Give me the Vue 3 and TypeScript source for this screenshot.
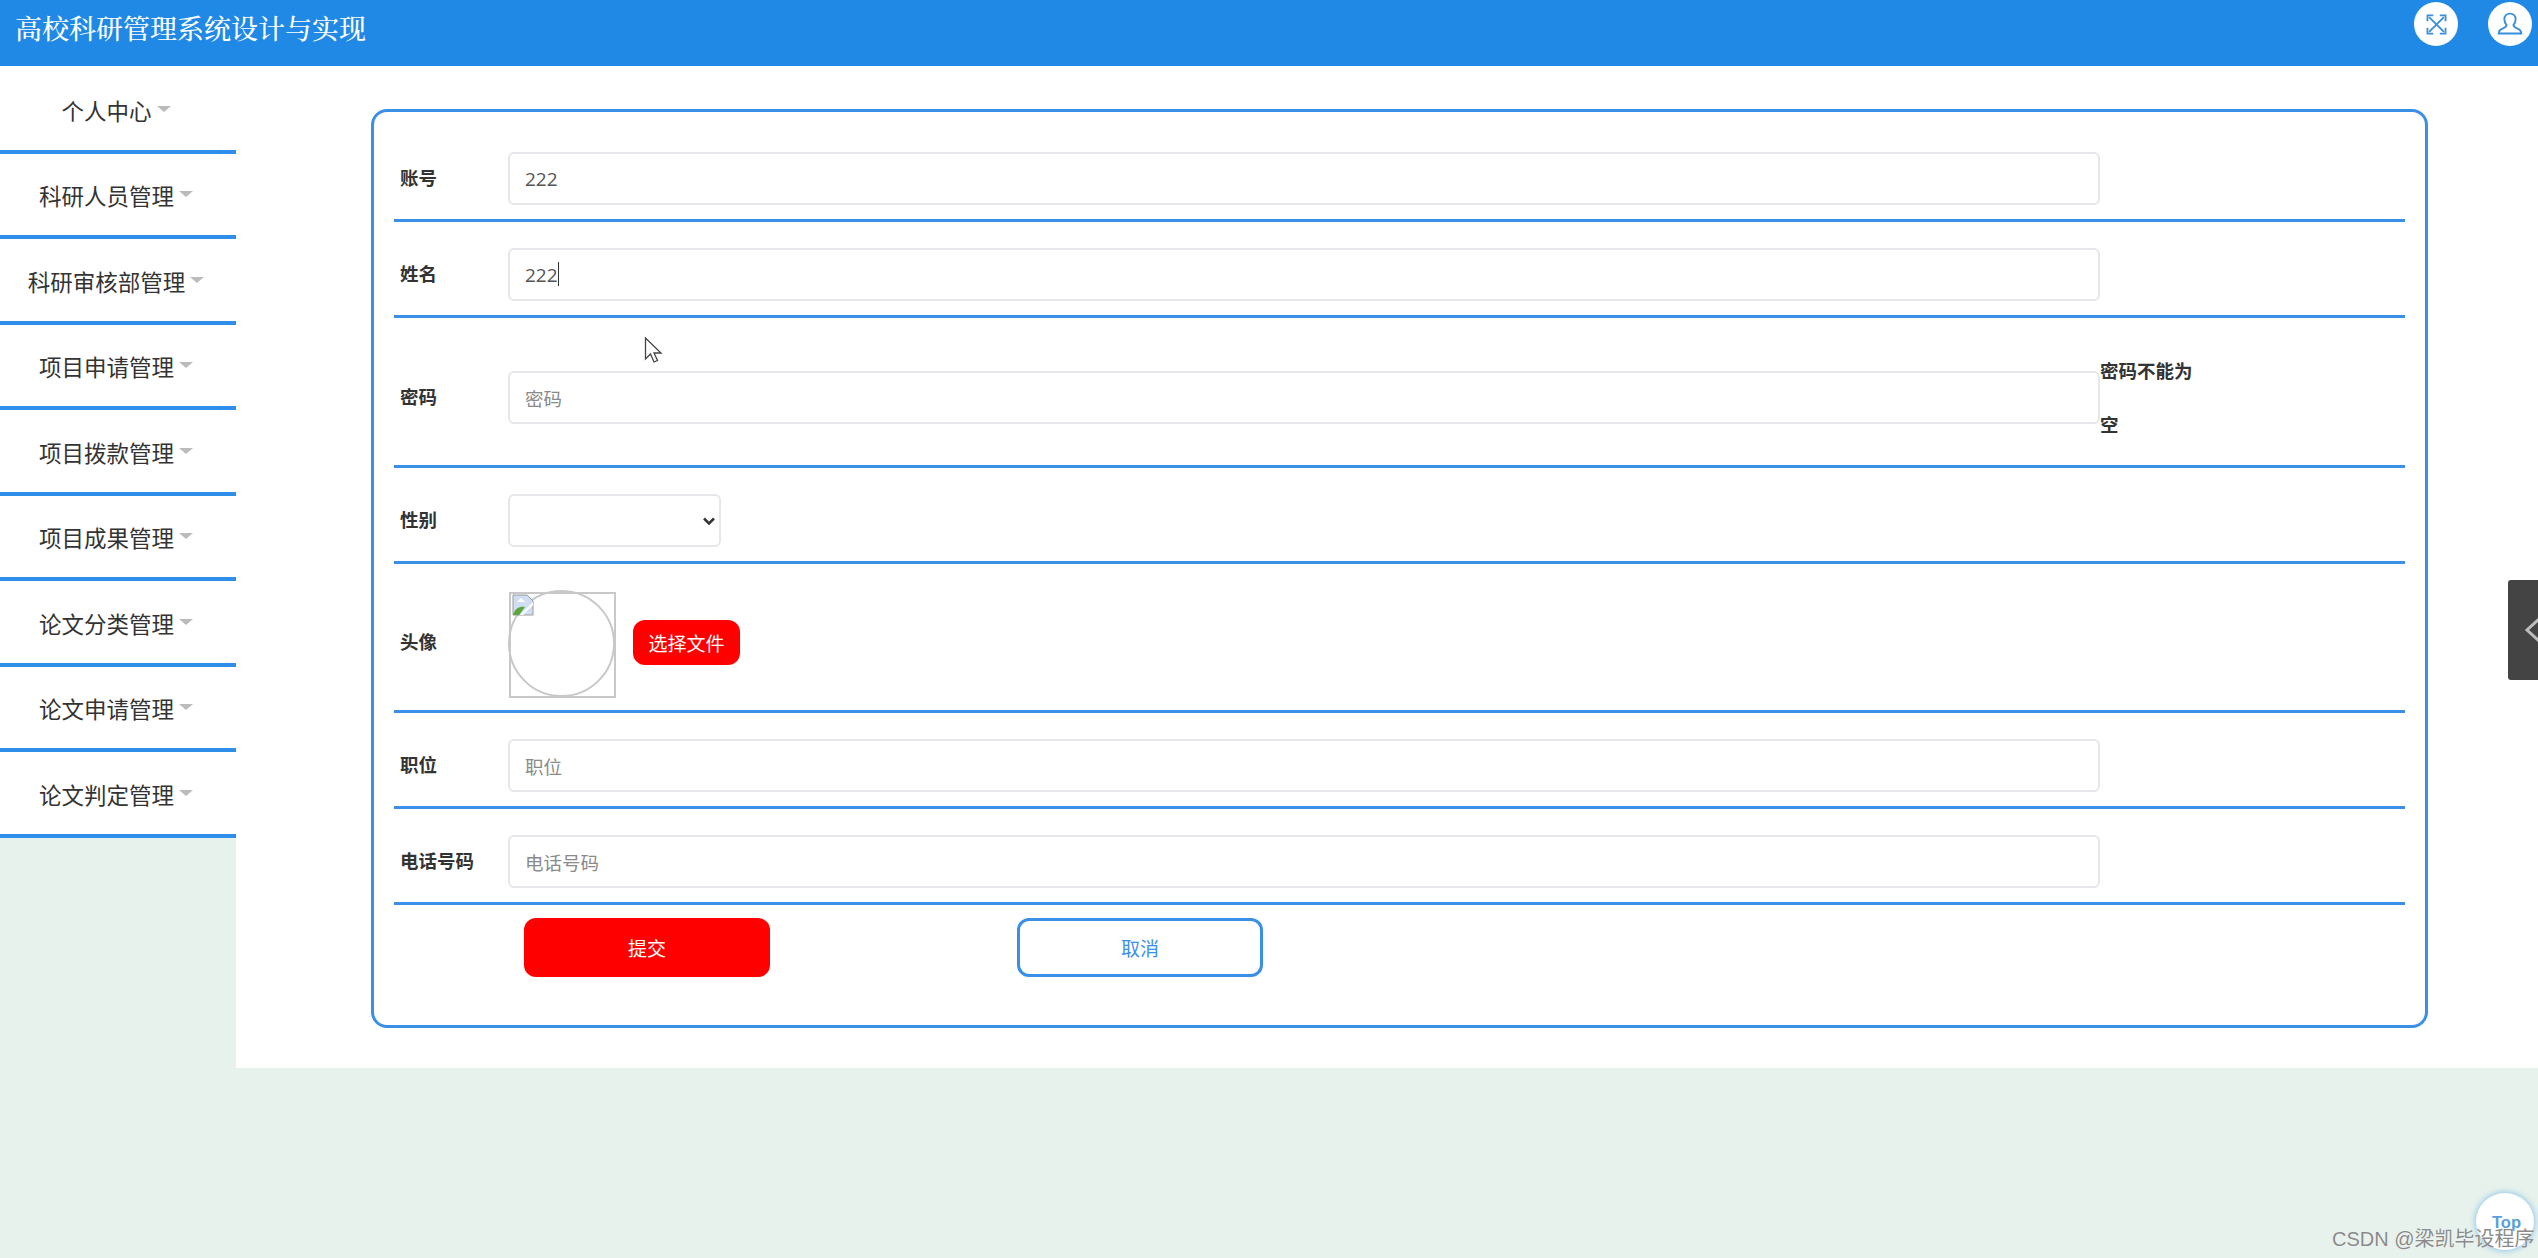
<script setup lang="ts">
const menu: string[] = [
  '个人中心',
  '科研人员管理',
  '科研审核部管理',
  '项目申请管理',
  '项目拨款管理',
  '项目成果管理',
  '论文分类管理',
  '论文申请管理',
  '论文判定管理',
]
</script>

<template>
  <div class="page">
    <header class="topbar">
      <div class="title">高校科研管理系统设计与实现</div>
      <div class="top-icons">
        <span class="round">
          <svg width="23" height="23" viewBox="0 0 28 28" fill="none" stroke="#3a8fdc" stroke-width="2.200">
            <path d="M5 5l18 18M23 5L5 23" />
            <path d="M3 10V3h7M18 3h7v7M25 18v7h-7M10 25H3v-7" />
          </svg>
        </span>
        <span class="round">
          <svg width="26" height="26" viewBox="0 0 30 30" fill="none" stroke="#3a8fdc" stroke-width="2.200">
            <path d="M15 3c-4 0-6.500 3-6.500 6.500 0 3 1.200 5 2.500 6.500 0 2-1 3-4 4-3 1-5 2.500-5 6h26c0-3.500-2-5-5-6-3-1-4-2-4-4 1.300-1.500 2.500-3.500 2.500-6.500C21.500 6 19 3 15 3z" />
          </svg>
        </span>
      </div>
    </header>

    <div class="body">
      <nav class="side">
        <div v-for="m in menu" :key="m" class="side-item">
          <span>{{ m }}</span><i class="caret"></i>
        </div>
      </nav>

      <main class="main">
        <form class="card">
          <div class="row">
            <label class="lab">账号</label>
            <input class="inp val" value="222" />
          </div>
          <div class="row">
            <label class="lab">姓名</label>
            <div class="inp-wrap">
              <input class="inp val" value="222" />
              <i class="text-caret"></i>
            </div>
          </div>
          <div class="row">
            <label class="lab">密码</label>
            <input class="inp" placeholder="密码" />
            <div class="err">密码不能为空</div>
          </div>
          <div class="row">
            <label class="lab">性别</label>
            <select class="sel"><option></option></select>
          </div>
          <div class="row">
            <label class="lab">头像</label>
            <div class="avatar">
              <svg class="broken" width="22" height="22" viewBox="0 0 22 22">
                <path d="M1 1h14l6 6v14H1z" fill="#cfdef2" stroke="#9a9a9a" />
                <path d="M5 8l4-4 4 4z" fill="#fff" />
                <path d="M1 21c2-7 7-9 12-8l-6 8z" fill="#5aa63c" />
                <path d="M21 8L8 21h3l10-10z" fill="#fff" />
              </svg>
            </div>
            <button type="button" class="pick">选择文件</button>
          </div>
          <div class="row">
            <label class="lab">职位</label>
            <input class="inp" placeholder="职位" />
          </div>
          <div class="row">
            <label class="lab">电话号码</label>
            <input class="inp" placeholder="电话号码" />
          </div>
          <div class="actions">
            <button type="button" class="btn submit">提交</button>
            <button type="button" class="btn cancel">取消</button>
          </div>
        </form>
      </main>
    </div>

    <svg class="pointer" width="20" height="27" viewBox="0 0 20 27">
      <path d="M1.500 1v21l5-5 3.500 8 3.500-1.500-3.500-7.500h7z" fill="#fff" stroke="#444" stroke-width="1.300" />
    </svg>

    <div class="tab">
      <svg width="30" height="100" viewBox="0 0 30 100" fill="none" stroke="#bdbdbd" stroke-width="3">
        <path d="M31 39L19 50l12 11" />
      </svg>
    </div>

    <div class="totop"><span>Top</span></div>
    <div class="mark">CSDN @梁凯毕设程序</div>
  </div>
</template>

<style>
html, body { margin: 0; background: #e8f2ec; }
</style>

<style scoped>
.page {
  position: relative;
  width: 2538px;
  height: 1258px;
  overflow: hidden;
  background: #e8f2ec;
  font-family: "Noto Sans CJK SC", "Liberation Sans", sans-serif;
  color: #333;
}
.topbar {
  height: 66px;
  background: #1f89e5;
  display: flex;
  align-items: flex-start;
  justify-content: space-between;
  padding-left: 15px;
  padding-right: 6px;
  box-sizing: border-box;
}
.title {
  font-family: "Noto Serif CJK SC", "Liberation Serif", "Noto Sans CJK SC", serif;
  font-size: 27px;
  font-weight: 500;
  line-height: 55px;
  color: #fff;
  white-space: nowrap;
}
.top-icons {
  display: flex;
  gap: 30px;
  padding-top: 2px;
}
.round {
  width: 44px;
  height: 44px;
  border-radius: 50%;
  background: #fff;
  display: flex;
  align-items: center;
  justify-content: center;
}
.body {
  display: flex;
  align-items: flex-start;
}
.side {
  width: 236px;
  flex: none;
  background: #fff;
  padding-top: 2px;
}
.side-item {
  height: 85.500px;
  box-sizing: border-box;
  border-bottom: 4px solid #2f8eea;
  display: flex;
  align-items: center;
  justify-content: center;
  padding: 2px 4px 0 0;
  font-size: 22.500px;
  color: #333;
  white-space: nowrap;
}
.caret {
  width: 0;
  height: 0;
  margin-left: 5px;
  margin-bottom: 2px;
  border-left: 7px solid transparent;
  border-right: 7px solid transparent;
  border-top: 6px solid #bbb;
}
.main {
  flex: 1;
  height: 1002px;
  background: #fff;
  padding: 43px 0 0 135px;
  box-sizing: border-box;
}
.card {
  width: 2057px;
  height: 919px;
  box-sizing: border-box;
  border: 3px solid #3a90e6;
  border-radius: 16px;
  padding: 14px 20px 0;
}
.row {
  display: flex;
  align-items: center;
  padding: 26px 0 14px 6px;
  border-bottom: 3px solid #3a90e6;
}
.lab {
  width: 108px;
  flex: none;
  margin-top: -4px;
  font-size: 18.500px;
  font-weight: 700;
  color: #333;
}
.inp-wrap {
  position: relative;
  display: flex;
}
.inp {
  width: 1592px;
  height: 53px;
  box-sizing: border-box;
  border: 2px solid #e6e7eb;
  border-radius: 6px;
  padding: 2px 15px 0;
  font-family: "Open Sans", "Noto Sans CJK SC", sans-serif;
  font-size: 19px;
  color: #555;
  background: #fff;
  outline: none;
}
.val {
  padding-top: 0;
}
.inp::placeholder {
  color: #8a8a8a;
  opacity: 1;
  font-family: "Noto Sans CJK SC", sans-serif;
  font-size: 18.500px;
}
.text-caret {
  position: absolute;
  left: 50px;
  top: 14px;
  width: 1px;
  height: 24px;
  background: #333;
}
.err {
  width: 100px;
  margin-top: -1px;
  font-size: 18.500px;
  font-weight: 700;
  line-height: 54px;
  color: #333;
}
.sel {
  appearance: none;
  width: 213px;
  height: 53px;
  box-sizing: border-box;
  border: 2px solid #e6e7eb;
  border-radius: 6px;
  background: #fff url("data:image/svg+xml,%3Csvg xmlns='http://www.w3.org/2000/svg' width='14' height='9' viewBox='0 0 14 9'%3E%3Cpath d='M2 1.500l5 5 5-5' fill='none' stroke='%23333' stroke-width='2.500'/%3E%3C/svg%3E") no-repeat 192px 21px;
  font-size: 18px;
  color: #333;
  outline: none;
}
.avatar {
  position: relative;
  width: 107px;
  height: 107px;
  margin-bottom: -1px;
  border-radius: 50%;
  border: 2px solid #c8c8c8;
  box-sizing: border-box;
  flex: none;
}
.avatar::before {
  content: "";
  position: absolute;
  left: -1px;
  top: 0;
  width: 107px;
  height: 106px;
  box-sizing: border-box;
  border: 2px solid #c8c8c8;
}
.broken {
  position: absolute;
  left: 2px;
  top: 2px;
}
.pick {
  margin-left: 18px;
  margin-bottom: 2px;
  width: 107px;
  height: 45px;
  border: none;
  border-radius: 12px;
  background: #f00;
  color: #fff;
  font-family: "Noto Sans CJK SC", sans-serif;
  font-size: 19px;
  padding: 0;
}
.actions {
  display: flex;
  gap: 247px;
  padding: 13px 0 0 130px;
}
.btn {
  width: 246px;
  height: 59px;
  box-sizing: border-box;
  border-radius: 12px;
  font-family: "Noto Sans CJK SC", sans-serif;
  font-size: 19px;
  padding: 0;
}
.submit {
  border: none;
  background: #f00;
  color: #fff;
}
.cancel {
  border: 3px solid #3a90e6;
  background: #fff;
  color: #3a90e6;
}
.pointer {
  position: absolute;
  left: 644px;
  top: 337px;
}
.tab {
  position: absolute;
  left: 2508px;
  top: 580px;
  width: 30px;
  height: 100px;
  border-radius: 3px 0 0 3px;
  background: #444;
  overflow: hidden;
}
.tab svg {
  display: block;
}
.totop {
  position: absolute;
  left: 2476px;
  top: 1193px;
  width: 58px;
  height: 57px;
  border-radius: 50%;
  background: #fff;
  box-shadow: 0 0 7px rgba(90, 170, 230, 0.8);
  color: #5a9fdc;
  font-family: "Liberation Sans", sans-serif;
  font-size: 16.500px;
  font-weight: 700;
}
.totop span {
  display: block;
  padding: 20px 0 0 16px;
}
.mark {
  position: absolute;
  left: 2332px;
  top: 1224px;
  font-family: "Liberation Sans", "Noto Sans CJK SC", sans-serif;
  font-size: 20px;
  line-height: 30px;
  color: #8a8a8a;
  white-space: nowrap;
  text-shadow: 0 0 1px #fff;
}
</style>
